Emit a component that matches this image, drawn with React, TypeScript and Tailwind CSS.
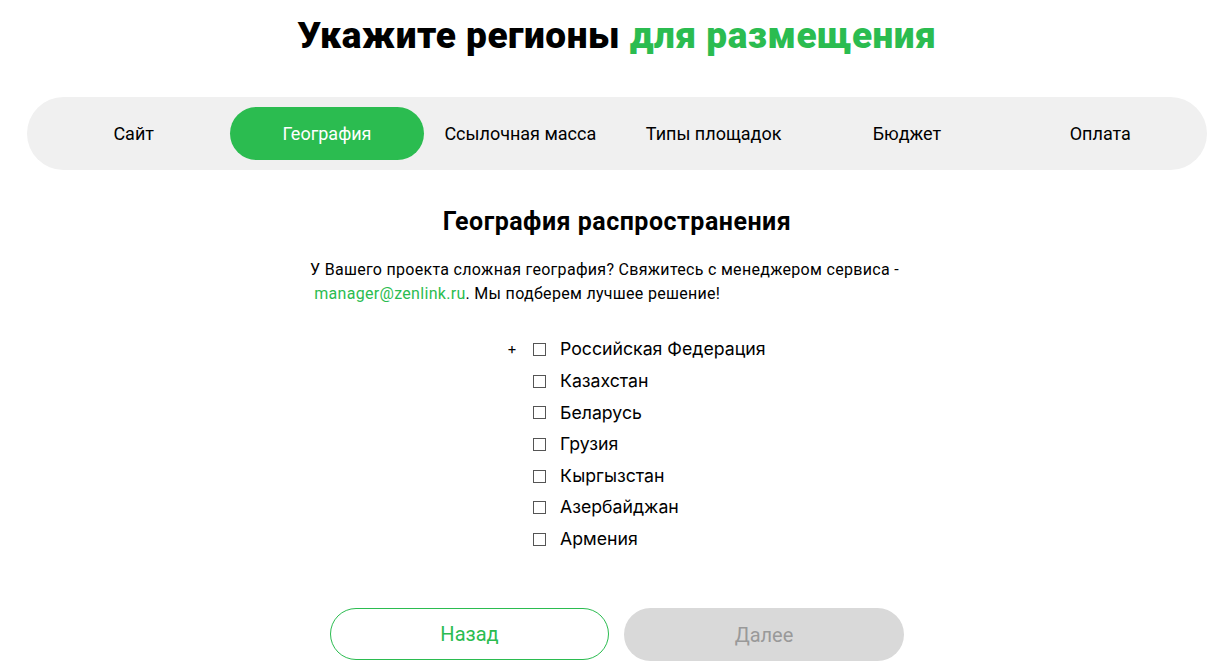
import React from "react";

const tabs = ["Сайт", "География", "Ссылочная масса", "Типы площадок", "Бюджет", "Оплата"];
const countries = ["Российская Федерация", "Казахстан", "Беларусь", "Грузия", "Кыргызстан", "Азербайджан", "Армения"];

export default function App() {
  return (
    <div className="w-[1224px] h-[672px] bg-white overflow-hidden pl-[10px] text-black" style={{ fontFamily: "Roboto, 'Liberation Sans', sans-serif" }}>
      <div className="flex flex-col">
        <h1 className="text-center text-[37px] font-black leading-[40px] mt-[16px] tracking-[0.5px]">
          Укажите регионы <span className="text-[#2bbc50]">для размещения</span>
        </h1>
        <div className="mx-[17px] mt-[41px] h-[73px] rounded-full bg-[#f0f0f0] px-[10px] flex items-center">
          {tabs.map((t, i) => (
            <div
              key={t}
              className={
                "flex-1 h-[53px] flex items-center justify-center rounded-full text-[18px] " +
                (i === 1 ? "bg-[#2bbc50] text-white" : "text-black")
              }
            >
              {t}
            </div>
          ))}
        </div>
        <h2 className="text-center text-[25px] font-bold mt-[37px] leading-[30px] tracking-[0.5px]">География распространения</h2>
        <p className="mx-auto w-[614px] mt-[21px] text-[16px] leading-[24px] tracking-[0.3px]">
          У Вашего проекта сложная география? Свяжитесь с менеджером сервиса -
          <br />
          &nbsp;<span className="text-[#2bbc50]">manager@zenlink.ru</span>. Мы подберем лучшее решение!
        </p>
        <div className="ml-[497px] mt-[27px] flex flex-col" style={{ fontFamily: "Inter, 'Noto Sans', sans-serif" }}>
          {countries.map((c, i) => (
            <div key={c} className={"flex items-center " + (i === 0 ? "h-[32.5px]" : "h-[31.6px]")}>
              <span className="w-[26px] text-[15px] pl-[0px]">{i === 0 ? "+" : ""}</span>
              <span className="w-[13px] h-[13px] border border-[#555] bg-white mr-[14px]" />
              <span className="text-[17.7px]">{c}</span>
            </div>
          ))}
        </div>
        <div className="flex justify-center gap-[15px] mt-[53px]">
          <button className="w-[279px] h-[52px] rounded-full border border-[#2bbc50] text-[#2bbc50] text-[20px] bg-white">Назад</button>
          <button className="w-[280px] h-[53px] rounded-full bg-[#d9d9d9] text-[#999] text-[20px]">Далее</button>
        </div>
      </div>
    </div>
  );
}
